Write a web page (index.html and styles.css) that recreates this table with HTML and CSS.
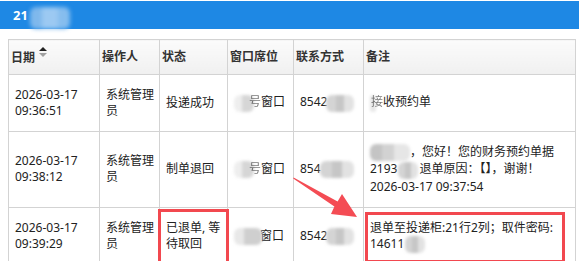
FILE: index.html
```html
<!DOCTYPE html>
<html lang="zh-CN">
<head>
    <meta charset="UTF-8">
    <meta name="viewport" content="width=device-width, initial-scale=1.0">
    <title>预约单记录</title>
    <link rel="stylesheet" href="styles.css">
</head>
<body>
    <header class="topbar">
        <span class="topbar-title">21</span><span class="blot blot-blue"></span>
    </header>

    <main class="content">
        <table class="record-table">
            <colgroup>
                <col class="col-date">
                <col class="col-user">
                <col class="col-status">
                <col class="col-window">
                <col class="col-phone">
                <col class="col-note">
            </colgroup>
            <thead>
                <tr>
                    <th>日期<span class="sort"><i class="sort-up"></i><i class="sort-down"></i></span></th>
                    <th>操作人</th>
                    <th>状态</th>
                    <th>窗口席位</th>
                    <th>联系方式</th>
                    <th>备注</th>
                </tr>
            </thead>
            <tbody>
                <tr>
                    <td>2026-03-17<br>09:36:51</td>
                    <td>系统管理员</td>
                    <td>投递成功</td>
                    <td><span class="blot blot-window"></span><span class="cover">号</span>窗口</td>
                    <td>8542<span class="blot blot-phone"></span></td>
                    <td><span class="blot blot-edge"></span><span class="cover">接</span>收预约单</td>
                </tr>
                <tr>
                    <td>2026-03-17<br>09:38:12</td>
                    <td>系统管理员</td>
                    <td>制单退回</td>
                    <td><span class="blot blot-window"></span><span class="cover">号</span>窗口</td>
                    <td>854<span class="blot blot-phone wide"></span></td>
                    <td><span class="blot blot-name"></span>，您好！您的财务预约单据<br>2193<span class="blot blot-short"></span>退单原因：【】，谢谢！<br>2026-03-17 09:37:54</td>
                </tr>
                <tr>
                    <td>2026-03-17<br>09:39:29</td>
                    <td>系统管理员</td>
                    <td class="marked">已退单, 等待取回<span class="mark-box"></span></td>
                    <td><span class="blot blot-window long"></span>窗口</td>
                    <td>8542<span class="blot blot-phone"></span></td>
                    <td class="marked">退单至投递柜:21行2列；取件密码:<br>14611<span class="blot blot-short"></span><span class="mark-box note-box"></span></td>
                </tr>
            </tbody>
        </table>
    </main>

    <!-- callout arrow pointing at the pickup note -->
    <svg class="callout" width="579" height="261" viewBox="0 0 579 261">
        <polygon points="293.6,177.4 337.6,201.4 342,194 357,217 331,214 334.4,206.6 293.2,178.6" fill="#f44c54"/>
    </svg>
</body>
</html>
```

FILE: styles.css
```css
body {
    margin: 0;
    padding-top: 1px;
    font-family: "Noto Sans", "Noto Sans CJK SC", sans-serif;
    font-size: 12px;
    color: #222;
    background: #fff;
    position: relative;
    overflow: hidden;
}

.topbar {
    height: 28px;
    background-color: #1e88e4;
    display: flex;
    align-items: center;
    padding-left: 13px;
}

.topbar-title {
    color: white;
    font-weight: bold;
    font-size: 13px;
}

.content {
    padding: 10px 0 0 8px;
}

.record-table {
    width: 567px;
    table-layout: fixed;
    border-collapse: collapse;
    line-height: 16px;
}

.col-date { width: 91px; }
.col-user { width: 60px; }
.col-status { width: 68px; }
.col-window { width: 66px; }
.col-phone { width: 70px; }
.col-note { width: 212px; }

.record-table th,
.record-table td {
    border: 1px solid #d3d3d3;
    text-align: left;
    vertical-align: middle;
}

.record-table th {
    padding: 7px 2px 8px;
    font-weight: bold;
    color: #333;
    background: linear-gradient(#fbfbfb, #f0f0f0);
    white-space: nowrap;
}

.record-table td {
    padding: 12px 4px 12px 6px;
}

.sort {
    display: inline-flex;
    flex-direction: column;
    gap: 2px;
    margin-left: 4px;
    vertical-align: 11px;
}

.sort i {
    width: 0;
    height: 0;
    border-left: 4px solid transparent;
    border-right: 4px solid transparent;
}

.sort-up {
    border-bottom: 4px solid #222;
}

.sort-down {
    border-top: 4px solid #a0a0a0;
}

/* mosaic smudges over hidden values */
.blot {
    display: inline-block;
    vertical-align: middle;
    height: 17px;
    border-radius: 6px;
    filter: blur(1.5px);
    background: linear-gradient(90deg, #d4d4d4 0 35%, #c6c6c6 35% 65%, #e2e2e2 65%);
}

.blot-blue {
    width: 40px;
    height: 22px;
    margin: 6px 0 0 2px;
    background: linear-gradient(90deg, #7fb8ec 0 30%, #9cc9f2 30% 70%, #86bdee 70%);
    filter: blur(2px);
}

.blot-window {
    width: 20px;
    margin-right: -5px;
    background: linear-gradient(90deg, #eeeeee 0 40%, #d6d6d6 40%);
}

.blot-window.long {
    width: 28px;
    margin-right: -2px;
    background: linear-gradient(90deg, #e8e8e8 0 35%, #cfcfcf 35%);
}

.blot-phone {
    width: 28px;
    margin-left: -1px;
}

.blot-phone.wide {
    width: 34px;
}

.blot-edge {
    width: 6px;
    margin-right: -5px;
    background: #e6e6e6;
}

.blot-name {
    width: 40px;
    background: linear-gradient(90deg, #c4c4c4 0 30%, #d2d2d2 30% 60%, #e6e6e6 60%);
}

.blot-short {
    width: 20px;
    margin: 0 1px;
}

.cover {
    opacity: 0.6;
}

.marked {
    position: relative;
}

.mark-box {
    position: absolute;
    left: -2px;
    right: -2px;
    top: 1px;
    bottom: -3px;
    border: 3px solid #f2484f;
}

.note-box {
    left: 1px;
    right: 10px;
    top: 4px;
    bottom: 2px;
}

.callout {
    position: absolute;
    top: 0;
    left: 0;
    pointer-events: none;
}
```
